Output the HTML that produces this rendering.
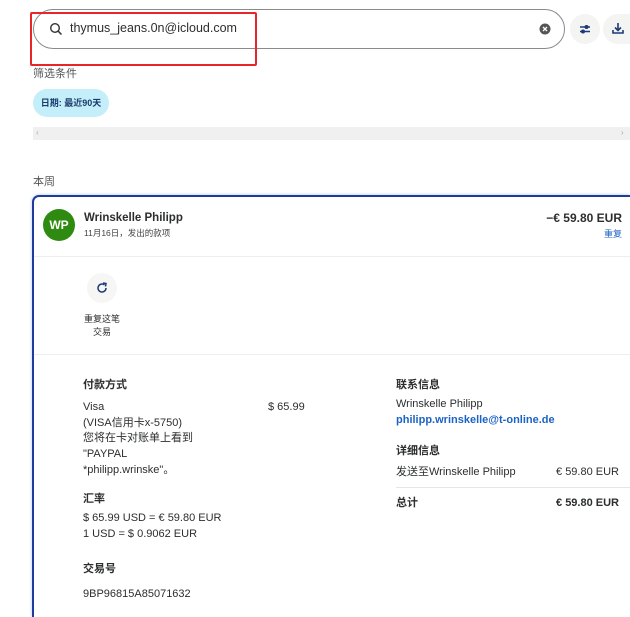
<!DOCTYPE html>
<html><head><meta charset="utf-8"><style>
*{margin:0;padding:0;box-sizing:border-box}
html,body{width:630px;height:617px;overflow:hidden}
body{background:#fff;font-family:"Liberation Sans","Noto Sans CJK SC",sans-serif;color:#2c2e2f;position:relative}
.a{position:absolute;white-space:nowrap}
.t{font-size:11px;line-height:14px}
.b{font-weight:bold}
</style></head><body>
<div class="a" style="left:33px;top:9px;width:532px;height:40px;border:1px solid #8a8a8a;border-radius:20px"></div>
<svg class="a" style="left:49px;top:22px" width="14" height="14" viewBox="0 0 14 14"><circle cx="6" cy="6" r="4.3" fill="none" stroke="#333" stroke-width="1.4"/><path d="M9.2 9.2L12.5 12.5" stroke="#333" stroke-width="1.5"/></svg>
<div class="a" style="left:70px;top:21px;font-size:12.5px;color:#2c2e2f">thymus_jeans.0n@icloud.com</div>
<div class="a" style="left:30px;top:12px;width:227px;height:54px;border:2.5px solid #e8262a;border-radius:2px"></div>
<svg class="a" style="left:539px;top:23px" width="12" height="12" viewBox="0 0 12 12"><circle cx="6" cy="6" r="5.5" fill="#555"/><path d="M4 4L8 8M8 4L4 8" stroke="#fff" stroke-width="1.3"/></svg>
<div class="a" style="left:570px;top:14px;width:30px;height:30px;border-radius:50%;background:#f4f4f2"></div>
<svg class="a" style="left:578px;top:22px" width="14" height="14" viewBox="0 0 14 14"><path d="M2 5H12M2 9.5H12" stroke="#1e3a78" stroke-width="1.6"/><circle cx="8.5" cy="5" r="2" fill="#1e3a78"/><circle cx="5" cy="9.5" r="2" fill="#1e3a78"/></svg>
<div class="a" style="left:603px;top:14px;width:27px;height:30px;border-radius:15px 0 0 15px;background:#f4f4f2"></div>
<svg class="a" style="left:611px;top:21px" width="14" height="14" viewBox="0 0 14 14"><path d="M7 2V9M4 6.5L7 9.5L10 6.5M2 9V12H12V9" fill="none" stroke="#1e3a78" stroke-width="1.6"/></svg>
<div class="a" style="left:33px;top:65px;font-size:11px;color:#555">筛选条件</div>
<div class="a b" style="left:33px;top:89px;width:76px;height:28px;border-radius:14px;background:#c4eefa;font-size:9px;line-height:28px;text-align:center;color:#1a3a6a">日期: 最近90天</div>
<div class="a" style="left:33px;top:127px;width:597px;height:13px;background:#f0f0f0"></div>
<div class="a" style="left:36px;top:128px;font-size:8px;color:#aaa">‹</div>
<div class="a" style="left:621px;top:128px;font-size:8px;color:#aaa">›</div>
<div class="a" style="left:33px;top:173px;font-size:11px;color:#555">本周</div>
<div class="a" style="left:32px;top:195px;width:598px;height:422px;border:2px solid #1d3c9c;border-bottom:none;border-right:none;border-radius:7px 0 0 0;box-shadow:0 0 3px #b0c4f0"></div>
<div class="a" style="left:43px;top:209px;width:32px;height:32px;border-radius:50%;background:#2f8a12;color:#fff;font-weight:bold;font-size:12px;line-height:32px;text-align:center">WP</div>
<div class="a b" style="left:84px;top:212px;font-size:11.5px">Wrinskelle Philipp</div>
<div class="a" style="left:84px;top:227px;font-size:8.5px;color:#444">11月16日，发出的款项</div>
<div class="a b" style="right:8px;top:211px;font-size:12px">−€ 59.80 EUR</div>
<div class="a" style="right:8px;top:227px;font-size:9px;color:#1b63c4">重复</div>
<div class="a" style="left:34px;top:256px;width:596px;height:1px;background:#eee"></div>
<div class="a" style="left:87px;top:273px;width:30px;height:30px;border-radius:50%;background:#f6f6f4"></div>
<svg class="a" style="left:95px;top:281px" width="14" height="14" viewBox="0 0 14 14"><path d="M11 7A4 4 0 1 1 9.5 3.9" fill="none" stroke="#1e3a78" stroke-width="1.5"/><path d="M8 2L11 2.5L10.5 5.5" fill="none" stroke="#1e3a78" stroke-width="1.5"/></svg>
<div class="a" style="left:83px;top:313px;font-size:9px;line-height:13px;text-align:center;width:38px">重复这笔<br>交易</div>
<div class="a" style="left:34px;top:354px;width:596px;height:1px;background:#eee"></div>
<div class="a t b" style="left:83px;top:378px">付款方式</div>
<div class="a t" style="left:83px;top:400px;line-height:15.7px">Visa<br>(VISA信用卡x-5750)<br>您将在卡对账单上看到<br>"PAYPAL<br>*philipp.wrinske"。</div>
<div class="a t" style="left:268px;top:400px">$ 65.99</div>
<div class="a t b" style="left:83px;top:492px">汇率</div>
<div class="a t" style="left:83px;top:511px;line-height:15.7px">$ 65.99 USD = € 59.80 EUR<br>1 USD = $ 0.9062 EUR</div>
<div class="a t b" style="left:83px;top:562px">交易号</div>
<div class="a t" style="left:83px;top:587px">9BP96815A85071632</div>
<div class="a t b" style="left:396px;top:378px">联系信息</div>
<div class="a t" style="left:396px;top:397px">Wrinskelle Philipp</div>
<div class="a t b" style="left:396px;top:413px;color:#1b63c4">philipp.wrinskelle@t-online.de</div>
<div class="a t b" style="left:396px;top:444px">详细信息</div>
<div class="a t" style="left:396px;top:465px">发送至Wrinskelle Philipp</div>
<div class="a t" style="right:11px;top:465px">€ 59.80 EUR</div>
<div class="a" style="left:396px;top:487px;width:234px;height:1px;background:#e6e6e6"></div>
<div class="a t b" style="left:396px;top:496px">总计</div>
<div class="a t b" style="right:11px;top:496px">€ 59.80 EUR</div>
</body></html>
